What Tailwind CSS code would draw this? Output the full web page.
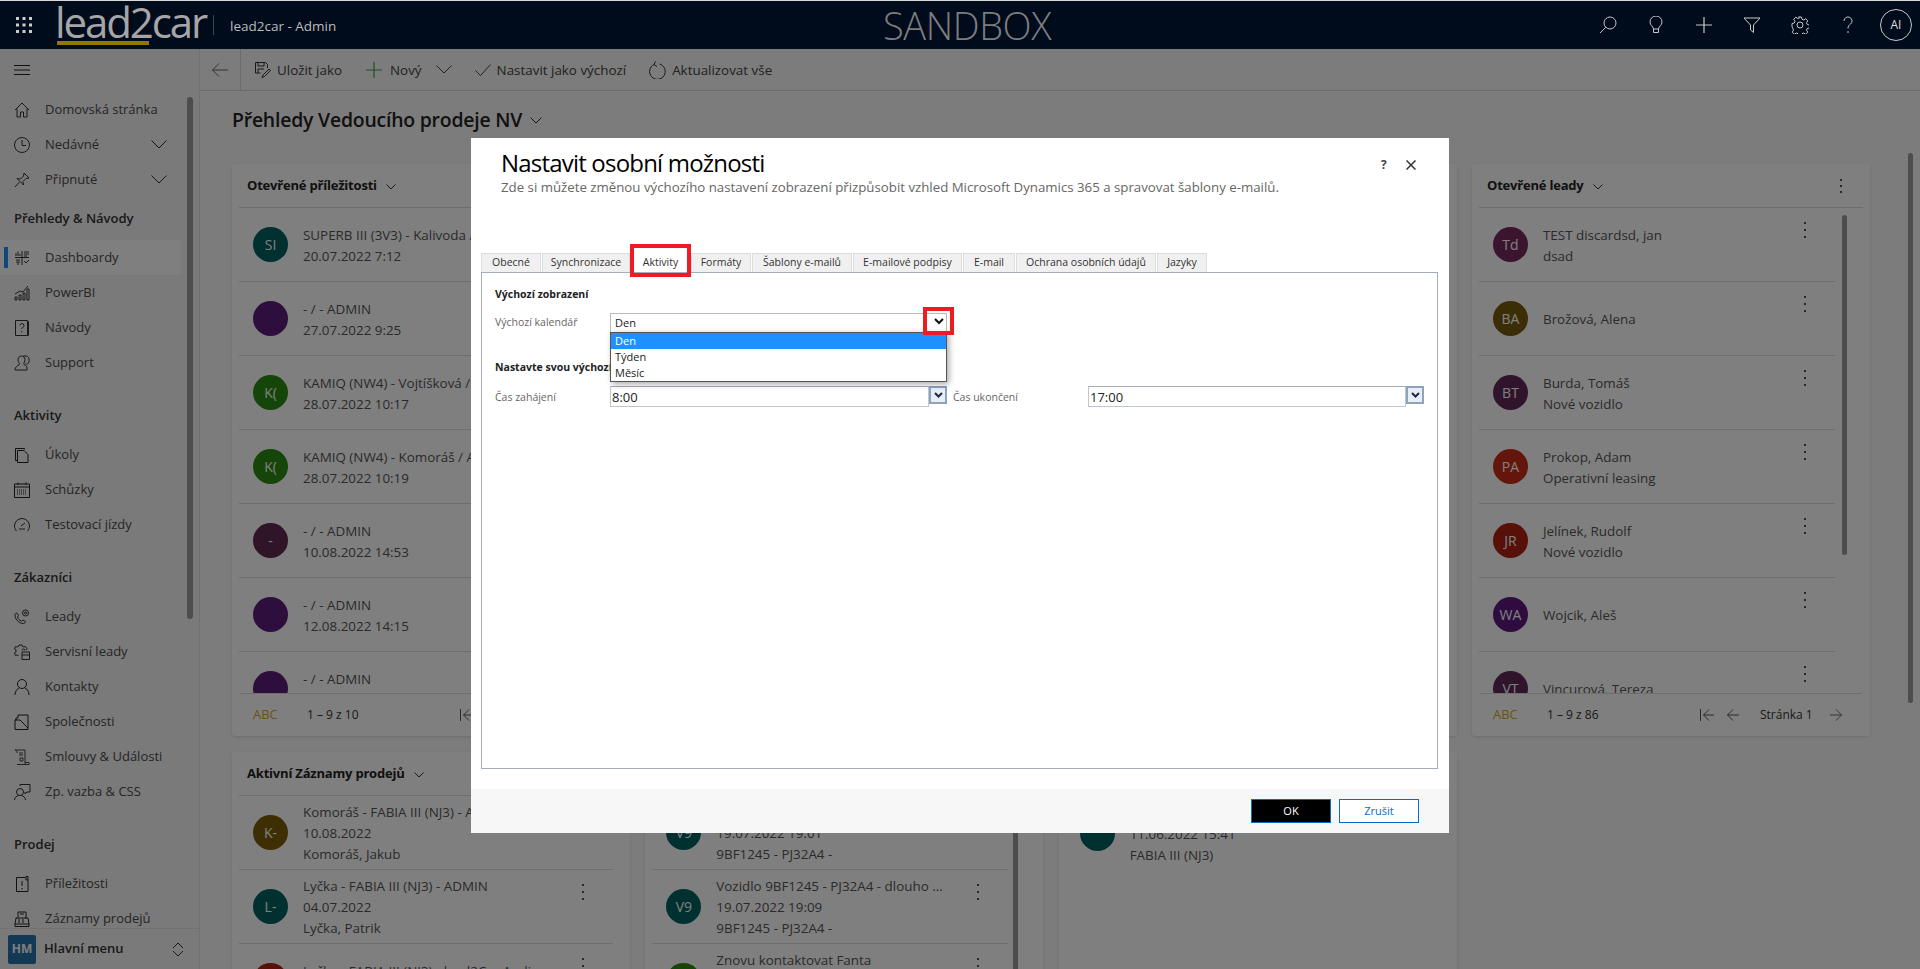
<!DOCTYPE html>
<html lang="cs">
<head>
    <meta charset="UTF-8" />
    <title>lead2car - Admin</title>
    <script src="https://cdn.jsdelivr.net/npm/@tailwindcss/browser@4"></script>
</head>
<body class="relative w-[1920px] h-[969px] overflow-hidden bg-[#f8f8f8] text-[#333] text-[13px] [font-family:'Open_Sans',sans-serif]">

<!-- Top bar -->
<header class="flex items-center h-[49px] bg-[#000b1c] border-t border-[#d8d8d8] text-[#ccc]">
    <div class="flex items-center w-[883px] shrink-0">
        <svg class="ml-[16px] w-[16px] h-[16px]" viewBox="0 0 16 16" fill="#ccc">
            <rect x="0" y="0" width="3" height="3"/><rect x="6.5" y="0" width="3" height="3"/><rect x="13" y="0" width="3" height="3"/>
            <rect x="0" y="6.5" width="3" height="3"/><rect x="6.5" y="6.5" width="3" height="3"/><rect x="13" y="6.5" width="3" height="3"/>
            <rect x="0" y="13" width="3" height="3"/><rect x="6.5" y="13" width="3" height="3"/><rect x="13" y="13" width="3" height="3"/>
        </svg>
        <div class="ml-[25px] w-[148px] flex flex-col">
            <span class="text-[42px] leading-[36px] tracking-[-2.1px] text-[#a6a6a6] -mt-[1px] -ml-[2px] whitespace-nowrap">lead2car</span>
            <span class="block w-[92px] h-[4px] bg-[#927700] mt-[1px]"></span>
        </div>
        <span class="block ml-[8px] w-px h-[20px] bg-[#444]"></span>
        <span class="ml-[16px] text-[13.500px] text-[#bbb] mt-[2px]">lead2car - Admin</span>
    </div>
    <span class="text-[38px] leading-[46px] font-light tracking-[-0.4px] text-[#7d7d7d]">SANDBOX</span>
    <div class="ml-auto flex items-center">
        <div class="w-[48px] flex justify-center"><svg class="w-[18px] h-[18px]" viewBox="0 0 18 18" fill="none" stroke="#c8c8c8"><circle cx="11" cy="7" r="6"/><path d="M6.8 11.3 1 17"/></svg></div>
        <div class="w-[48px] flex justify-center"><svg class="w-[18px] h-[18px]" viewBox="0 0 18 18" fill="none" stroke="#c8c8c8"><path d="M6.5 13C6 10 3 9.500 3 6a6 6 0 0 1 12 0c0 3.500-3 4-3.500 7zM6.500 13v3.500h5V13"/></svg></div>
        <div class="w-[48px] flex justify-center"><svg class="w-[18px] h-[18px]" viewBox="0 0 18 18" fill="none" stroke="#c8c8c8" stroke-width="1.200"><path d="M9 1v16M1 9h16"/></svg></div>
        <div class="w-[48px] flex justify-center"><svg class="w-[18px] h-[18px]" viewBox="0 0 18 18" fill="none" stroke="#c8c8c8"><path d="M1 2h16l-6.500 7v7.500l-3-2.500V9z"/></svg></div>
        <div class="w-[48px] flex justify-center"><svg class="w-[18px] h-[18px]" viewBox="0 0 18 18" fill="none" stroke="#c8c8c8"><circle cx="9" cy="9" r="3"/><path d="M7.500 1h3l.5 2.300 1.700.7 2-1.300 2.100 2.100-1.300 2 .7 1.700 2.300.5v3l-2.300.5-.7 1.700 1.300 2-2.100 2.100-2-1.300-1.700.7-.5 2.300h-3l-.5-2.300-1.700-.7-2 1.300-2.100-2.100 1.300-2-.7-1.700L1 10.500v-3l2.300-.5.7-1.700-1.300-2 2.100-2.100 2 1.300 1.700-.7z"/></svg></div>
        <div class="w-[48px] flex justify-center"><svg class="w-[18px] h-[18px]" viewBox="0 0 18 18" fill="none" stroke="#c8c8c8"><path d="M5 5a4 4 0 1 1 6.500 3.100C10 9.300 9 10 9 12.500M9 15v2"/></svg></div>
        <div class="w-[48px] flex justify-center"><span class="flex items-center justify-center w-[32px] h-[32px] rounded-full border border-[#c8c8c8] text-[12px] text-[#ddd]">AI</span></div>
    </div>
</header>

<div class="flex h-[920px]">
    <!-- Sidebar -->
    <aside class="relative flex flex-col w-[200px] shrink-0 bg-[#f5f5f5] border-r border-[#e2e2e2] text-[#4a4a4a]">
        <div class="flex items-center h-[42px] pl-[14px] shrink-0">
            <svg class="w-[16px] h-[10px]" viewBox="0 0 16 10" stroke="#222"><path d="M0 .5h16M0 5h16M0 9.500h16"/></svg>
        </div>
        <nav class="flex-1 overflow-hidden pt-px">
            <a class="flex items-center h-[35px] pl-[14px]"><svg class="w-[31px] h-[16px] shrink-0" viewBox="0 0 31 16" fill="none" stroke="#333"><path d="M1 8 8 1l7 7M3 6.500V15h3.500v-5h3v5H13V6.500"/></svg>Domovská stránka</a>
            <a class="flex items-center h-[35px] pl-[14px]"><svg class="w-[31px] h-[16px] shrink-0" viewBox="0 0 31 16" fill="none" stroke="#333"><circle cx="8" cy="8" r="7.500"/><path d="M8 3v5.500h4"/></svg>Nedávné<svg class="ml-auto mr-[32px] w-[16px] h-[9px]" viewBox="0 0 16 9" fill="none" stroke="#333"><path d="m.5.5 7.500 7.500L15.500.500"/></svg></a>
            <a class="flex items-center h-[35px] pl-[14px]"><svg class="w-[31px] h-[16px] shrink-0" viewBox="0 0 31 16" fill="none" stroke="#333"><path d="M10 1l5 5-3 .5-3 3 .5 3.500L3 6.500l3.500.5 3-3zM5.500 10 1 15"/></svg>Připnuté<svg class="ml-auto mr-[32px] w-[16px] h-[9px]" viewBox="0 0 16 9" fill="none" stroke="#333"><path d="m.5.5 7.500 7.500L15.500.500"/></svg></a>
            <div class="flex items-center h-[43px] pl-[14px] font-semibold text-[#333]">Přehledy &amp; Návody</div>
            <a class="relative flex items-center h-[35px] w-[181px] pl-[14px] bg-white"><span class="absolute left-[4px] top-[7px] w-[4px] h-[21px] bg-[#1e90ff]"></span><svg class="w-[31px] h-[16px] shrink-0" viewBox="0 0 31 16" fill="none" stroke="#333"><path d="M1 7.500h14M8 1v14M2 6V3M4 6V1.500M6 6V4M10 2h5M10 4h5M10 6h3M2 10h4M2 12h4M4 13v2M10 11l2 2 3-3"/></svg>Dashboardy</a>
            <a class="flex items-center h-[35px] pl-[14px]"><svg class="w-[31px] h-[16px] shrink-0" viewBox="0 0 31 16" fill="none" stroke="#333"><path d="M1 15v-3h2v3zM5 15v-5h2v5zM9 15V8h2v7zM13 15V4h2v11zM1 9l5-3 3 1 5-6"/></svg>PowerBI</a>
            <a class="flex items-center h-[35px] pl-[14px]"><svg class="w-[31px] h-[16px] shrink-0" viewBox="0 0 31 16" fill="none" stroke="#333"><path d="M1.500.500h12v15h-12zM13.500 1.500h1v14h-1M6 5.500a2 2 0 1 1 2.500 2c-.7.300-.8.700-.8 1.500M7.700 11v1.500"/></svg>Návody</a>
            <a class="flex items-center h-[35px] pl-[14px]"><svg class="w-[31px] h-[16px] shrink-0" viewBox="0 0 31 16" fill="none" stroke="#333"><path d="M1 15c0-3 2-4 4-5 1-2-1-3-1-5 0-2.500 1.500-4 3.500-4S11 2.500 11 4.500c0 2-1.500 3-1 5 1 .5 2 1 3 2.500v3zM9 1.500c1-.8 3-.8 4.500 0S15.500 5 15 7s-2 2.500-3.500 2"/></svg>Support</a>
            <div class="flex items-center h-[57px] pt-[14px] pl-[14px] font-semibold text-[#333]">Aktivity</div>
            <a class="flex items-center h-[35px] pl-[14px]"><svg class="w-[31px] h-[16px] shrink-0" viewBox="0 0 31 16" fill="none" stroke="#222"><path d="M1.500 1.500h9v1M1.500 1.500v12h2M3.500 3.500H10l4 4v8H3.500z"/></svg>Úkoly</a>
            <a class="flex items-center h-[35px] pl-[14px]"><svg class="w-[31px] h-[16px] shrink-0" viewBox="0 0 31 16" fill="none" stroke="#222"><path d="M.5 2h15v13.500H.5zM.5 5h15M4 .5v2.500M12 .5v2.500"/><path stroke-dasharray="1 1" d="M3 8h10M3 10h10M3 12h10"/></svg>Schůzky</a>
            <a class="flex items-center h-[35px] pl-[14px]"><svg class="w-[31px] h-[16px] shrink-0" viewBox="0 0 31 16" fill="none" stroke="#333"><path d="M2.500 14C1 12.500.5 10.500.5 9a7.500 7.500 0 0 1 15 0c0 1.500-.5 3.500-2 5M5 12h6M7 9l4-3"/></svg>Testovací jízdy</a>
            <div class="flex items-center h-[57px] pt-[14px] pl-[14px] font-semibold text-[#333]">Zákazníci</div>
            <a class="flex items-center h-[35px] pl-[14px]"><svg class="w-[31px] h-[16px] shrink-0" viewBox="0 0 31 16" fill="none" stroke="#333"><path d="M1 6c0-1 1-2 2-2l1.500 2.500L3.500 8c.5 2 2 3.500 4 4l1.500-1 2.500 1.500c0 1-1 2-2 2C5 14.500 1 10.500 1 6z"/><circle cx="11.500" cy="4" r="3"/><circle cx="11.500" cy="4" r="1"/></svg>Leady</a>
            <a class="flex items-center h-[35px] pl-[14px]"><svg class="w-[31px] h-[16px] shrink-0" viewBox="0 0 31 16" fill="none" stroke="#333"><path d="M5 1h3l.5 1.500 1.500.5 1.500-.5 1.500 2-1 1.500M5 1l-.5 1.500L3 3 1.500 2.500.5 5 2 6v2L.5 9l1 2.500 1.500-.5 1.500.5M8 8h7.500v7.500H8zM8 11h7.500M11 6.500a1.500 1.500 0 1 0-3 0"/></svg>Servisní leady</a>
            <a class="flex items-center h-[35px] pl-[14px]"><svg class="w-[31px] h-[16px] shrink-0" viewBox="0 0 31 16" fill="none" stroke="#222"><circle cx="8" cy="5" r="4.500"/><path d="M1 16c0-4 2.500-6.500 4-7M15 16c0-4-2.500-6.500-4-7"/></svg>Kontakty</a>
            <a class="flex items-center h-[35px] pl-[14px]"><svg class="w-[31px] h-[16px] shrink-0" viewBox="0 0 31 16" fill="none" stroke="#222"><path d="M1 15.500V6h1V4h2V1h10v14.500zM1 6h5l8 8"/></svg>Společnosti</a>
            <a class="flex items-center h-[35px] pl-[14px]"><svg class="w-[31px] h-[16px] shrink-0" viewBox="0 0 31 16" fill="none" stroke="#444"><path d="M1 1h10v13c0 1 1 1.500 1.500 1.500h2.500c.5 0 .5-1.500 0-2H11M1 1c1 0 2 1 2 3M3 15.500h9.500M5 4h4M5 6h4M6 9h3v3H6z"/></svg>Smlouvy &amp; Události</a>
            <a class="flex items-center h-[35px] pl-[14px]"><svg class="w-[31px] h-[16px] shrink-0" viewBox="0 0 31 16" fill="none" stroke="#333"><circle cx="6" cy="8" r="3.500"/><path d="M.5 16c0-2.500 2-4 4-4.500M11.500 16c0-2.500-2-4-4-4.500M6 2V.5h10V8h-3l-2 2V8"/></svg>Zp. vazba &amp; CSS</a>
            <div class="flex items-center h-[57px] pt-[14px] pl-[14px] font-semibold text-[#333]">Prodej</div>
            <a class="flex items-center h-[35px] pl-[14px]"><svg class="w-[31px] h-[16px] shrink-0" viewBox="0 0 31 16" fill="none" stroke="#222"><path d="M2.500 1.500h9M14 4v11.500H2.500v-14M12 .5h2v3.500h-2zM8 5v5M8 12v1.500"/></svg>Příležitosti</a>
            <a class="flex items-center h-[35px] pl-[14px]"><svg class="w-[31px] h-[16px] shrink-0" viewBox="0 0 31 16" fill="none" stroke="#222"><path d="M1 15.500h14V13l-1-6H2L1 13zM1 13h14M4 7V1h8v6M6 3h4M4 9h2M8 9h2M4 11h2M8 11h2"/></svg>Záznamy prodejů</a>
        </nav>
        <div class="flex items-center h-[41px] shrink-0 bg-[#f5f5f5] border-t border-[#e2e2e2] pl-[8px]">
            <span class="flex items-center justify-center w-[28px] h-[29px] rounded-[2px] bg-[#2472ac] text-white text-[12px] font-bold">HM</span>
            <span class="ml-[8px] font-semibold text-[#333]">Hlavní menu</span>
            <svg class="ml-auto mr-[15px] w-[12px] h-[15px]" viewBox="0 0 12 15" fill="none" stroke="#333"><path d="m1 6 5-5 5 5M1 9l5 5 5-5"/></svg>
        </div>
        <span class="absolute left-[187px] top-[48px] w-[6px] h-[522px] rounded-full bg-[#9a9a9a]"></span>
    </aside>

    <!-- Main -->
    <main class="flex-1 min-w-0">
        <div class="flex items-center h-[42px] border-b border-[#d8d8d8] text-[#444] text-[13.400px]">
            <div class="flex items-center justify-center w-[41px] h-full border-r border-[#d8d8d8]">
                <svg class="w-[16px] h-[14px]" viewBox="0 0 16 14" fill="none" stroke="#666"><path d="M7 .5.5 7 7 13.500M.5 7H16"/></svg>
            </div>
            <svg class="ml-[14px] w-[16px] h-[16px]" viewBox="0 0 16 16" fill="none" stroke="#333"><path d="M.5.5h10l2 2V6M.5.5V11h5M3 .5V4h6V.5M3 11V7h6M14 7 8 13l-1 2.500 2.500-1 6-6z"/></svg>
            <span class="ml-[6px] pt-[2px]">Uložit jako</span>
            <svg class="ml-[24px] w-[16px] h-[16px]" viewBox="0 0 16 16" stroke="#3f9f4f" stroke-width="1.200"><path d="M8 0v16M0 8h16"/></svg>
            <span class="ml-[8px] pt-[2px]">Nový</span>
            <svg class="ml-[14px] w-[16px] h-[9px]" viewBox="0 0 16 9" fill="none" stroke="#444"><path d="m.5.5 7.500 7.500L15.500.500"/></svg>
            <svg class="ml-[23px] w-[16px] h-[12px]" viewBox="0 0 16 12" fill="none" stroke="#444"><path d="m.5 6.500 5 5L15.500.5"/></svg>
            <span class="ml-[6px] pt-[2px]">Nastavit jako výchozí</span>
            <svg class="ml-[23px] w-[17px] h-[18px]" viewBox="0 0 17 18" fill="none" stroke="#333"><path d="M5 3.500a7.800 7.800 0 1 0 5.500-.5M6.500.5 5 3.500l3 2"/></svg>
            <span class="ml-[6px] pt-[2px]">Aktualizovat vše</span>
        </div>
        <div class="flex items-center h-[73px] pl-[32px] pb-[15px] text-[#222] font-semibold text-[19.400px] tracking-[-0.2px]">
            Přehledy Vedoucího prodeje NV
            <svg class="ml-[8px] w-[12px] h-[7px]" viewBox="0 0 12 7" fill="none" stroke="#333"><path d="m.5.5 5.500 5.500L11.500.500"/></svg>
        </div>
        <div class="grid grid-cols-[repeat(4,398px)] grid-rows-[572px_300px] gap-x-[15.33px] gap-y-[16px] pl-[32px]">
            <section id="card1" class="flex flex-col bg-white rounded-[3px] shadow"></section>
            <section class="bg-white rounded-[3px] shadow"></section>
            <section class="bg-white rounded-[3px] shadow"></section>
            <section id="card4" class="relative flex flex-col bg-white rounded-[3px] shadow"></section>
            <section id="card5" class="flex flex-col bg-white rounded-[3px] shadow"></section>
            <section id="card6" class="relative flex flex-col bg-white rounded-[3px] shadow"></section>
            <section id="card7" class="flex flex-col bg-white rounded-[3px] shadow"></section>
        </div>
    </main>
</div>
<span class="absolute left-[1908px] top-[153px] w-[5px] h-[550px] rounded-full bg-[#9a9a9a]"></span>

<!-- Dimmed background -->
<div class="absolute left-0 right-0 top-[49px] bottom-0 bg-black/50"></div>

<!-- Dialog -->
<div class="absolute left-[471px] top-[138px] flex flex-col w-[978px] h-[695px] bg-white">
    <div class="relative h-[115px] shrink-0 pl-[30px] pt-[9px]">
        <h1 class="text-[24px] leading-[32px] tracking-[-0.8px] text-black">Nastavit osobní možnosti</h1>
        <p class="text-[13.250px] leading-[18px] text-[#666] -mt-[1px]">Zde si můžete změnou výchozího nastavení zobrazení přizpůsobit vzhled Microsoft Dynamics 365 a spravovat šablony e-mailů.</p>
        <span class="absolute left-[910px] top-[18px] text-[12px] font-bold text-[#444]">?</span>
        <svg class="absolute left-[935px] top-[22px] w-[10px] h-[10px]" viewBox="0 0 10 10" stroke="#333" stroke-width="1.500"><path d="m.5.5 9 9M9.500.5l-9 9"/></svg>
    </div>
    <div class="flex h-[19px] ml-[10px] text-[10.500px] text-[#333] shrink-0">
        <span class="flex items-center justify-center w-[60px] mr-px bg-[#f0f0f0] border border-b-0 border-[#ddd]">Obecné</span>
        <span class="flex items-center justify-center w-[88px] bg-[#f0f0f0] border border-b-0 border-[#ddd]">Synchronizace</span>
        <span class="flex items-center justify-center w-[61px] bg-white">Aktivity</span>
        <span class="flex items-center justify-center w-[60px] mr-px bg-[#f0f0f0] border border-b-0 border-[#ddd]">Formáty</span>
        <span class="flex items-center justify-center w-[100px] mr-px bg-[#f0f0f0] border border-b-0 border-[#ddd]">Šablony e-mailů</span>
        <span class="flex items-center justify-center w-[109px] mr-px bg-[#f0f0f0] border border-b-0 border-[#ddd]">E-mailové podpisy</span>
        <span class="flex items-center justify-center w-[52px] mr-px bg-[#f0f0f0] border border-b-0 border-[#ddd]">E-mail</span>
        <span class="flex items-center justify-center w-[140px] mr-px bg-[#f0f0f0] border border-b-0 border-[#ddd]">Ochrana osobních údajů</span>
        <span class="flex items-center justify-center w-[50px] bg-[#f0f0f0] border border-b-0 border-[#ddd]">Jazyky</span>
    </div>
    <div class="h-[497px] ml-[10px] mr-[11px] shrink-0 border border-[#a5acb5] pt-[13px] pl-[13px] text-[10.500px]">
        <div class="h-[17px] leading-[17px] font-bold text-[#222]">Výchozí zobrazení</div>
        <div class="flex items-center mt-[10px] h-[19px]">
            <span class="w-[115px] text-[#666]">Výchozí kalendář</span>
            <div class="flex items-center w-[337px] h-[19px] pl-[4px] border border-[#bbb] border-b-0 text-[#222] text-[11px]">Den</div>
        </div>
        <div class="h-[17px] leading-[17px] mt-[27px] font-bold text-[#222]">Nastavte svou výchozí</div>
        <div class="flex items-start mt-[10px] h-[21px]">
            <span class="w-[115px] text-[#666] leading-[21px] pt-px">Čas zahájení</span>
            <div class="w-[319px] h-[21px] pl-[1px] border border-[#c2c7cf] border-t-[#a5acb5] text-[13px] leading-[20px] text-[#222]">8:00</div>
            <span class="flex items-center justify-center w-[18px] h-[18px] bg-[#e8eef5] border-2 border-[#8ba3bf]"><svg class="w-[9px] h-[6px]" viewBox="0 0 9 6" fill="none" stroke="#1c2a44" stroke-width="2"><path d="m1 1 3.500 3.500L8 1"/></svg></span>
            <span class="w-[135px] ml-[6px] text-[#666] leading-[21px] pt-px">Čas ukončení</span>
            <div class="w-[318px] h-[21px] pl-[1px] border border-[#c2c7cf] border-t-[#a5acb5] text-[13px] leading-[20px] text-[#222]">17:00</div>
            <span class="flex items-center justify-center w-[18px] h-[18px] bg-[#e8eef5] border-2 border-[#8ba3bf]"><svg class="w-[9px] h-[6px]" viewBox="0 0 9 6" fill="none" stroke="#1c2a44" stroke-width="2"><path d="m1 1 3.500 3.500L8 1"/></svg></span>
        </div>
    </div>
    <div class="flex items-center justify-end flex-1 mt-[20px] pr-[30px] gap-[8px] bg-[#f7f7f7] text-[11px]">
        <span class="flex items-center justify-center w-[80px] h-[24px] bg-black border border-[#0a6cc4] text-white">OK</span>
        <span class="flex items-center justify-center w-[80px] h-[24px] bg-white border border-[#0a6cc4] text-[#0a6cc4]">Zrušit</span>
    </div>
    <!-- Open combo list -->
    <div class="absolute left-[139px] top-[194px] w-[337px] h-[50px] bg-white border border-[#555] shadow-[2px_2px_6px_rgba(0,0,0,0.35)] text-[11px] text-[#222]">
        <div class="h-[16px] leading-[16px] pl-[4px] bg-[#1e90ff] text-white">Den</div>
        <div class="h-[16px] leading-[16px] pl-[4px]">Týden</div>
        <div class="h-[16px] leading-[16px] pl-[4px]">Měsíc</div>
    </div>
    <!-- Red highlights from the guide -->
    <div class="absolute left-[159px] top-[106px] w-[61px] h-[33px] border-[4px] border-[#ed1c24]"></div>
    <div class="absolute left-[452px] top-[169px] w-[31px] h-[28px] border-[4px] border-[#ed1c24] flex items-center justify-center"><svg class="w-[10px] h-[7px]" viewBox="0 0 10 7" fill="none" stroke="#111" stroke-width="2"><path d="m1 1 4 4 4-4"/></svg></div>
</div>

<script>
    const kebab = '<svg class="w-[4px] h-[16px] mt-[14px] mr-[28px] shrink-0" viewBox="0 0 4 16" fill="#555"><rect x="1" y="0" width="2" height="2"/><rect x="1" y="7" width="2" height="2"/><rect x="1" y="14" width="2" height="2"/></svg>';

    function row(initials, color, lines, rightClass, plain) {
        return `<div class="flex h-[74px] shrink-0 ml-[7px] ${rightClass} ${plain ? '' : 'border-b border-[#dcdcdc]'}">
            <div class="flex items-center pl-[14px] shrink-0">
                <span class="flex items-center justify-center w-[35px] h-[35px] rounded-full text-white text-[14px] ${color}">${initials}</span>
            </div>
            <div class="flex flex-col justify-center flex-1 min-w-0 pl-[15px] pt-[2px] text-[13.400px] text-[#555] leading-[21px] whitespace-nowrap overflow-hidden">
                ${lines.map(l => `<div>${l}</div>`).join('')}
            </div>
            ${plain ? '' : kebab}
        </div>`;
    }

    function head(title, menu) {
        return `<div class="flex items-center h-[44px] mx-[7px] pl-[8px] border-b border-[#dcdcdc] shrink-0">
            <span class="font-bold text-[#222] tracking-[-0.2px]">${title}</span>
            <svg class="ml-[9px] w-[10px] h-[6px] mt-[2px]" viewBox="0 0 10 6" fill="none" stroke="#333"><path d="m.5.5 4.500 4.500L9.500.500"/></svg>
            ${menu ? '<svg class="ml-auto mr-[20px] w-[4px] h-[14px]" viewBox="0 0 4 14" fill="#555"><rect x="1" y="0" width="2" height="2"/><rect x="1" y="6" width="2" height="2"/><rect x="1" y="12" width="2" height="2"/></svg>' : ''}
        </div>`;
    }

    function foot(range, page) {
        return `<div class="flex items-center h-[43px] mx-[8px] pl-[13px] border-t border-[#dcdcdc] shrink-0">
            <span class="w-[54px] text-[#d4a81c]">ABC</span>
            <span class="w-[153px] text-[#333] text-[12px]">${range}</span>
            <svg class="w-[20px] h-[12px] shrink-0" viewBox="0 0 20 12" fill="none" stroke="#555"><path d="M.5 0v12M9 .5 3.500 6 9 11.500M3.500 6H14"/></svg>
            <svg class="ml-[7px] w-[12px] h-[12px] shrink-0" viewBox="0 0 12 12" fill="none" stroke="#555"><path d="M6 .5.500 6 6 11.500M.5 6H12"/></svg>
            <span class="ml-[21px] w-[70px] shrink-0 text-[12px] text-[#333] whitespace-nowrap">${page}</span>
            <svg class="w-[12px] h-[12px] shrink-0" viewBox="0 0 12 12" fill="none" stroke="#667"><path d="m6 .5 5.500 5.500L6 11.500M11.500 6H0"/></svg>
        </div>`;
    }

    const list = rows => `<div class="h-[485px] overflow-hidden shrink-0">${rows}</div>`;
    const r35 = 'mr-[35px]', r17 = 'mr-[17px]';
    const thumb = pos => `<span class="absolute ${pos} w-[5px] rounded-full bg-[#9a9a9a]"></span>`;

    document.getElementById('card1').innerHTML = head('Otevřené příležitosti') + list([
        row('SI', 'bg-[#006060]', ['SUPERB III (3V3) - Kalivoda / ADMIN', '20.07.2022 7:12'], r35),
        row('', 'bg-[#5c1c78]', ['- / - ADMIN', '27.07.2022 9:25'], r35),
        row('K(', 'bg-[#2a8a10]', ['KAMIQ (NW4) - Vojtíšková / ADMIN', '28.07.2022 10:17'], r35),
        row('K(', 'bg-[#2a8a10]', ['KAMIQ (NW4) - Komoráš / ADMIN', '28.07.2022 10:19'], r35),
        row('-', 'bg-[#602850]', ['- / - ADMIN', '10.08.2022 14:53'], r35),
        row('', 'bg-[#5c1c78]', ['- / - ADMIN', '12.08.2022 14:15'], r35),
        row('', 'bg-[#5c1c78]', ['- / - ADMIN', '15.08.2022 9:40'], r35)
    ].join('')) + foot('1 – 9 z 10', 'Stránka 1');

    document.getElementById('card4').innerHTML = head('Otevřené leady', true) + list([
        row('Td', 'bg-[#762a5c]', ['TEST discardsd, jan', 'dsad'], r35),
        row('BA', 'bg-[#765c0c]', ['Brožová, Alena'], r35),
        row('BT', 'bg-[#602858]', ['Burda, Tomáš', 'Nové vozidlo'], r35),
        row('PA', 'bg-[#c82c18]', ['Prokop, Adam', 'Operativní leasing'], r35),
        row('JR', 'bg-[#ae2212]', ['Jelínek, Rudolf', 'Nové vozidlo'], r35),
        row('WA', 'bg-[#5e1880]', ['Wojcik, Aleš'], r35),
        row('VT', 'bg-[#602858]', ['Vincurová, Tereza'], r35)
    ].join('')) + foot('1 – 9 z 86', 'Stránka 1') + thumb('left-[370px] top-[51px] h-[340px]');

    document.getElementById('card5').innerHTML = head('Aktivní Záznamy prodejů') + [
        row('K-', 'bg-[#7c5c08]', ['Komoráš - FABIA III (NJ3) - ADMIN', '10.08.2022', 'Komoráš, Jakub'], r17),
        row('L-', 'bg-[#006060]', ['Lyčka - FABIA III (NJ3) - ADMIN', '04.07.2022', 'Lyčka, Patrik'], r17),
        row('L-', 'bg-[#ae2212]', ['Lyčka - FABIA III (NJ3) - lead2Car Audi', '04.07.2022'], r17)
    ].join('');

    document.getElementById('card6').innerHTML = head('&nbsp;') + [
        row('V9', 'bg-[#006060]', ['&nbsp;', '19.07.2022 19:01', '9BF1245 - PJ32A4 -'], r35),
        row('V9', 'bg-[#006060]', ['Vozidlo 9BF1245 - PJ32A4 - dlouho ...', '19.07.2022 19:09', '9BF1245 - PJ32A4 -'], r35),
        row('', 'bg-[#2a8a10]', ['Znovu kontaktovat Fanta', '19.07.2022 19:20', '9BF1245 - PJ32A4 -'], r35)
    ].join('') + thumb('left-[368px] top-[44px] h-[260px]');

    document.getElementById('card7').innerHTML = head('&nbsp;') +
        row('', 'bg-[#006060]', ['&nbsp;', '11.06.2022 15:41', 'FABIA III (NJ3)'], r35, true);
</script>
</body>
</html>
